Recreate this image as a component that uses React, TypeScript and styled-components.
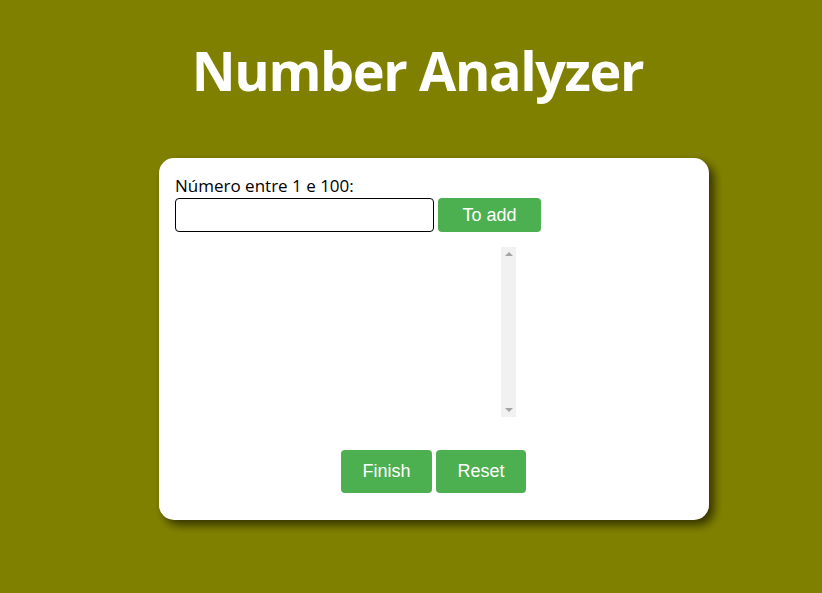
import React from "react";
import styled, { createGlobalStyle } from "styled-components";

const Global = createGlobalStyle`
  html, body { margin: 0; padding: 0; }
  body {
    background: #808000;
    font-family: "Open Sans", "DejaVu Sans", sans-serif;
    width: 822px;
    height: 593px;
    overflow: hidden;
  }
`;

const Page = styled.div`
  display: flex;
  flex-direction: column;
  padding-top: 32px;
`;

const Title = styled.h1`
  margin: 0;
  padding-left: 13px;
  text-align: center;
  color: #ffffff;
  font-family: "Open Sans", sans-serif;
  font-weight: 700;
  font-size: 54px;
  letter-spacing: -1.4px;
  line-height: 76px;
`;

const Card = styled.div`
  margin: 50px 0 0 159px;
  width: 550px;
  box-sizing: border-box;
  background: #ffffff;
  border-radius: 15px;
  box-shadow: 5px 5px 10px rgba(0, 0, 0, 0.6);
  padding: 17px 16px 27px 16px;
  display: flex;
  flex-direction: column;
`;

const Label = styled.label`
  font-size: 17px;
  line-height: 22px;
  color: #000;
`;

const Row = styled.div`
  display: flex;
  gap: 4px;
  margin-top: 1px;
`;

const Input = styled.input`
  box-sizing: border-box;
  width: 259px;
  height: 34px;
  border: 1px solid #000;
  border-radius: 4px;
  outline: none;
  padding: 0 8px;
`;

const Button = styled.button<{ $w: number; $h: number }>`
  box-sizing: border-box;
  width: ${(p) => p.$w}px;
  height: ${(p) => p.$h}px;
  background: #4caf50;
  color: #ffffff;
  border: none;
  border-radius: 4px;
  font-family: "Liberation Sans", Arial, sans-serif;
  font-size: 18px;
  cursor: pointer;
`;

const ListBox = styled.div`
  margin: 15px 0 0 177px;
  width: 164px;
  height: 170px;
  display: flex;
  justify-content: flex-end;
  background: #fff;
`;

const ScrollTrack = styled.div`
  width: 15px;
  height: 100%;
  background: #f1f1f1;
  display: flex;
  flex-direction: column;
  justify-content: space-between;
  align-items: center;
  padding: 5px 0;
  box-sizing: border-box;
`;

const Arrow = styled.span<{ $down?: boolean }>`
  width: 0;
  height: 0;
  border-left: 4px solid transparent;
  border-right: 4px solid transparent;
  ${(p) =>
    p.$down
      ? "border-top: 4px solid #a3a3a3;"
      : "border-bottom: 4px solid #a3a3a3;"}
`;

const Actions = styled.div`
  display: flex;
  justify-content: center;
  gap: 4px;
  margin-top: 33px;
  padding-right: 1px;
`;

export default function App() {
  return (
    <>
      <Global />
      <Page>
        <Title>Number Analyzer</Title>
        <Card>
          <Label htmlFor="num">Número entre 1 e 100:</Label>
          <Row>
            <Input id="num" type="number" />
            <Button $w={103} $h={34}>To add</Button>
          </Row>
          <ListBox>
            <ScrollTrack>
              <Arrow />
              <Arrow $down />
            </ScrollTrack>
          </ListBox>
          <Actions>
            <Button $w={91} $h={43}>Finish</Button>
            <Button $w={90} $h={43}>Reset</Button>
          </Actions>
        </Card>
      </Page>
    </>
  );
}
